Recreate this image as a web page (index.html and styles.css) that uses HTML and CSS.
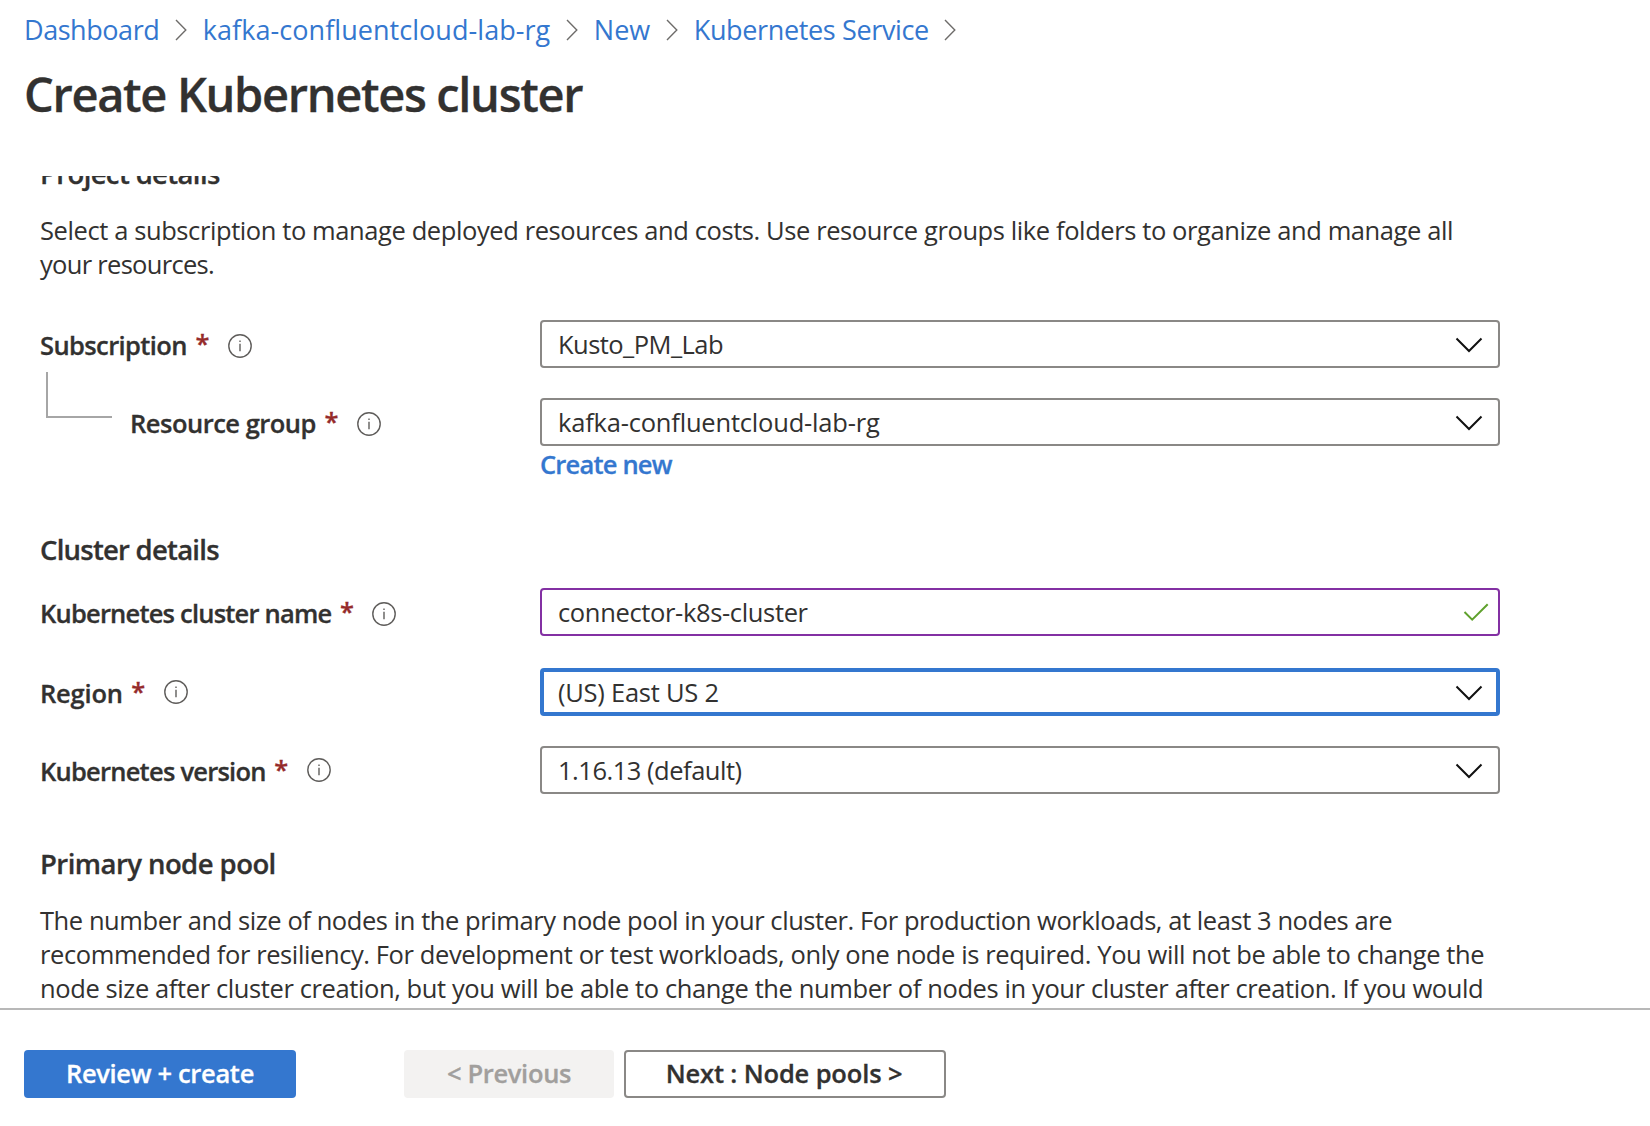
FILE: index.html
```html
<!DOCTYPE html>
<html lang="en">
<head>
<meta charset="utf-8">
<title>Create Kubernetes cluster</title>
<link rel="stylesheet" href="styles.css">
</head>
<body>
<svg class="defs" width="0" height="0">
  <symbol id="crumb" viewBox="0 0 12 22"><path d="M1 1 L10.8 11 L1 21" fill="none" stroke="#6e6c6a" stroke-width="1.4"/></symbol>
  <symbol id="down" viewBox="0 0 28 16"><path d="M1.5 1.5 L14 14 L26.5 1.5" fill="none" stroke="#111" stroke-width="2"/></symbol>
  <symbol id="info" viewBox="0 0 24 24"><circle cx="12" cy="12" r="11.2" fill="none" stroke="#5f5d5b" stroke-width="1.4"/><path d="M12 9.8V17.2M12 6.4V8" stroke="#605e5c" stroke-width="1.4"/></symbol>
  <symbol id="check" viewBox="0 0 26 20"><path d="M1.5 10 L9.2 17.7 L24.7 2.2" fill="none" stroke="#5fa12d" stroke-width="2"/></symbol>
</svg>
<header class="header">
  <nav class="crumbs">
    <a class="c1">Dashboard</a><svg><use href="#crumb"/></svg>
    <a class="c2">kafka-confluentcloud-lab-rg</a><svg><use href="#crumb"/></svg>
    <a class="c3">New</a><svg><use href="#crumb"/></svg>
    <a class="c4">Kubernetes Service</a><svg><use href="#crumb"/></svg>
  </nav>
  <h1>Create Kubernetes cluster</h1>
</header>
<main class="content">
  <h2 class="project">Project details</h2>
  <p class="intro"><span class="t1">Select a subscription to manage deployed resources and costs. Use resource groups like folders to organize and manage all</span><br><span class="t2">your resources.</span></p>
  <div class="row subscription">
    <label><span class="l1">Subscription</span><i>*</i><svg class="info low"><use href="#info"/></svg></label>
    <div class="field"><span class="f1">Kusto_PM_Lab</span><svg class="down"><use href="#down"/></svg></div>
  </div>
  <div class="row group">
    <label><b class="elbow"></b><span class="l2">Resource group</span><i>*</i><svg class="info low"><use href="#info"/></svg></label>
    <div class="field"><span class="f2">kafka-confluentcloud-lab-rg</span><svg class="down"><use href="#down"/></svg></div>
  </div>
  <div class="create"><a>Create new</a></div>
  <h2 class="cluster">Cluster details</h2>
  <div class="row name">
    <label><span class="l3">Kubernetes cluster name</span><i>*</i><svg class="info low"><use href="#info"/></svg></label>
    <div class="field edited"><span class="f3">connector-k8s-cluster</span><svg class="check"><use href="#check"/></svg></div>
  </div>
  <div class="row region">
    <label><span class="l4">Region</span><i>*</i><svg class="info"><use href="#info"/></svg></label>
    <div class="field focused"><span class="f4">(US) East US 2</span><svg class="down"><use href="#down"/></svg></div>
  </div>
  <div class="row version">
    <label><span class="l5">Kubernetes version</span><i>*</i><svg class="info"><use href="#info"/></svg></label>
    <div class="field"><span class="f5">1.16.13 (default)</span><svg class="down"><use href="#down"/></svg></div>
  </div>
  <h2 class="pool">Primary node pool</h2>
  <p class="about"><span class="t3">The number and size of nodes in the primary node pool in your cluster. For production workloads, at least 3 nodes are</span><br><span class="t4">recommended for resiliency. For development or test workloads, only one node is required. You will not be able to change the</span><br><span class="t5">node size after cluster creation, but you will be able to change the number of nodes in your cluster after creation. If you would</span></p>
</main>
<footer class="footer">
  <button class="primary">Review + create</button>
  <button class="previous" disabled>&lt; Previous</button>
  <button class="next">Next : Node pools &gt;</button>
</footer>
</body>
</html>
```
FILE: styles.css
```css
* { box-sizing: border-box; }
body {
  margin: 0;
  height: 1126px;
  display: flex;
  flex-direction: column;
  overflow: hidden;
  background: #fff;
  color: #323130;
  font: 25.5px/34px "Open Sans", "Noto Sans", sans-serif;
}
.defs { position: absolute; }

/* Header */
.header { height: 176px; padding: 13px 24px 0; flex: none; }
.crumbs { display: flex; align-items: center; height: 34px; white-space: nowrap; font-size: 27px; }
.crumbs a, .create a { color: #3477cf; }
.crumbs svg { width: 12px; height: 22px; margin: 0 16px 0 15.5px; flex: none; }
.c1 { letter-spacing: -0.45px; }
.c2 { letter-spacing: 0.05px; }
.c4 { letter-spacing: -0.36px; }
h1 { margin: 15px 0 0; font-size: 47px; line-height: 64px; font-weight: 600; letter-spacing: -1.34px; }
h2 { margin: 0; font-size: 27.5px; line-height: 34px; font-weight: 600; }
h1, h2, label, .create, button { -webkit-text-stroke: 0.3px; }
p { margin: 0; white-space: nowrap; }

/* Scrolled form */
.content { height: 832px; padding: 0 40px; overflow: hidden; flex: none; }
.project { margin-top: -19px; letter-spacing: -0.64px; }
.intro { margin-top: 22px; }
.t1 { letter-spacing: -0.403px; }
.t2 { letter-spacing: -0.7px; }
.t3 { letter-spacing: -0.43px; }
.t4 { letter-spacing: -0.4px; }
.t5 { letter-spacing: -0.393px; }
.row { display: flex; height: 48px; }
.row label { width: 500px; display: flex; align-items: center; padding-top: 2px; font-weight: 600; }
.row i { margin: -4px 0 0 8.5px; color: #952b2b; font-style: normal; }
.l1 { letter-spacing: -0.6px; }
.l2 { letter-spacing: -0.5px; }
.l3 { letter-spacing: -0.79px; }
.l4 { letter-spacing: -0.2px; }
.l5 { letter-spacing: -0.76px; }
.f1 { letter-spacing: -0.55px; }
.f2 { letter-spacing: -0.2px; }
.f3 { letter-spacing: -0.35px; }
.f4 { letter-spacing: -0.25px; }
.f5 { letter-spacing: -0.48px; }
.info { width: 24px; height: 24px; margin: -2px 0 0 18.5px; }
.info.low { margin-top: 2px; }
.field {
  width: 960px;
  display: flex;
  align-items: center;
  justify-content: space-between;
  padding: 0 15px 0 16px;
  border: 2px solid #8a8886;
  border-radius: 4px;
}
.down { width: 28px; height: 16px; margin-top: 2px; }
.check { width: 26px; height: 20px; }
.edited { border-color: #8330a3; padding-right: 9px; }
.focused { border: 4px solid #3477cf; padding: 0 13px 0 14px; }
.subscription { margin-top: 39px; }
.group { margin-top: 30px; }
.elbow { width: 66px; height: 46px; margin: -56px 18px 0 6px; border: solid #a6a6a6; border-width: 0 0 2px 2px; }
.create { margin: 1px 0 0 500px; font-weight: 600; letter-spacing: -0.8px; }
.cluster { margin-top: 52px; letter-spacing: -0.76px; }
.name { margin-top: 21px; }
.region { margin-top: 32px; }
.version { margin-top: 30px; }
.pool { margin-top: 53px; letter-spacing: -0.55px; }
.about { margin-top: 22px; }

/* Wizard actions */
.footer { height: 118px; border-top: 2px solid #b8b8b8; background: #fff; padding: 40px 24px 0; display: flex; }
button {
  height: 48px;
  padding: 0 0 3px;
  border: 0;
  border-radius: 4px;
  font: inherit;
  font-weight: 600;
  letter-spacing: -0.33px;
  color: #323130;
}
.primary { width: 272px; background: #3477cf; color: #fff; }
.previous { width: 210px; margin-left: 108px; background: #f3f2f1; color: #a19f9d; }
.next { width: 322px; margin-left: 10px; padding-right: 2px; background: #fff; border: 2px solid #8a8886; letter-spacing: -0.15px; }
```
